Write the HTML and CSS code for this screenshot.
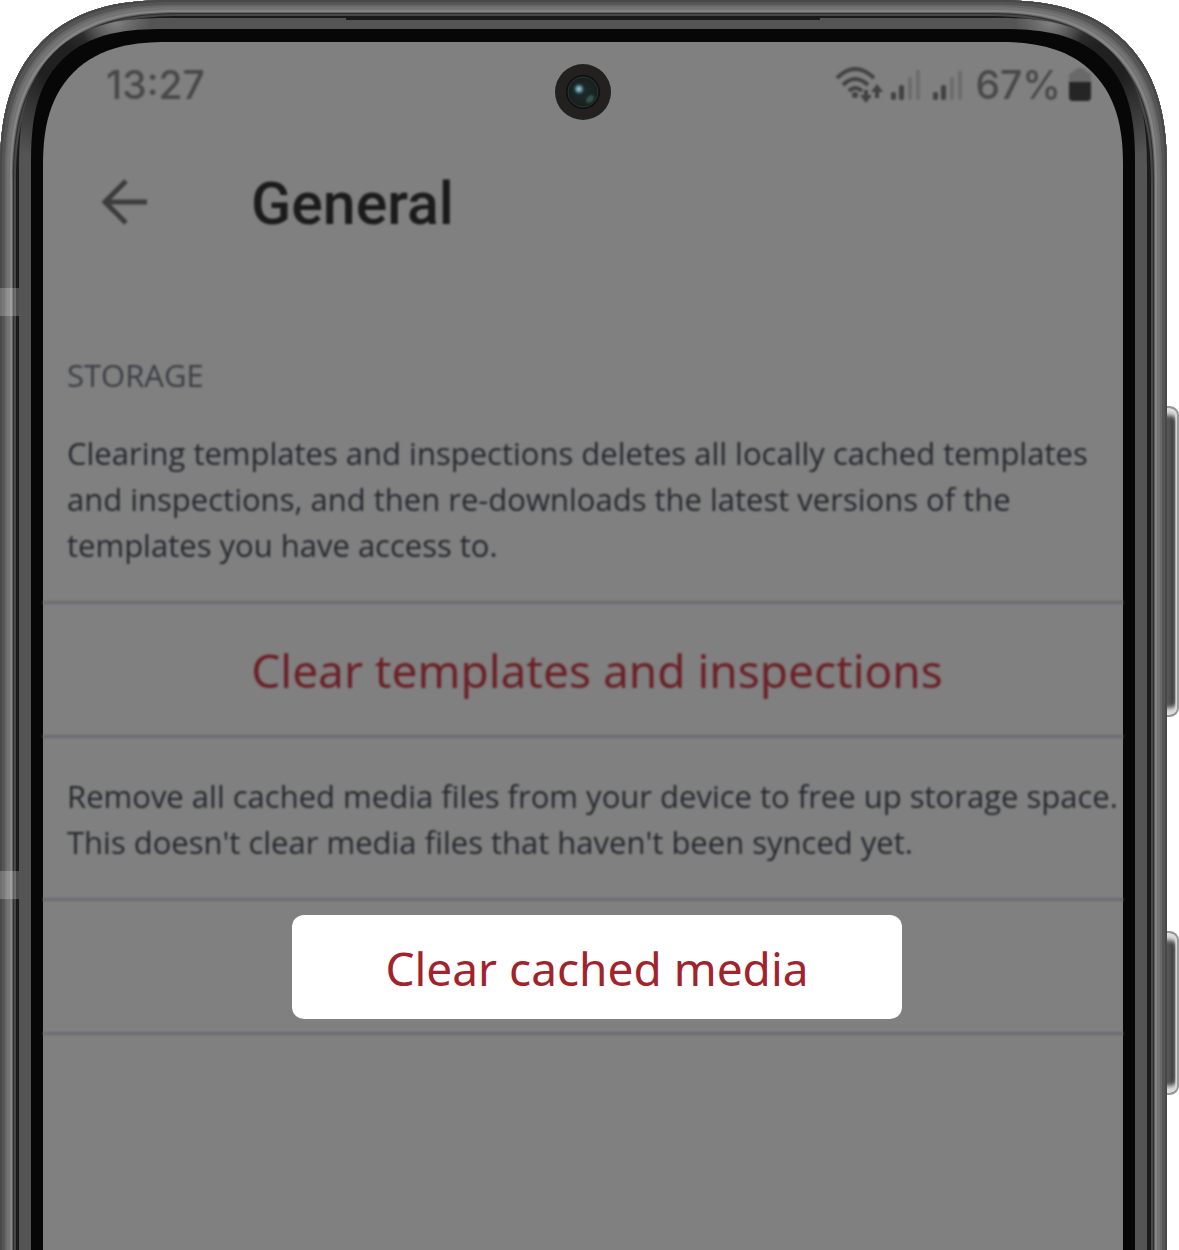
FILE: index.html
```
<!DOCTYPE html>
<html lang="en">
  <head>
    <meta charset="utf-8">
    <meta name="viewport" content="width=device-width, initial-scale=1">
    <title>General</title>
    <link rel="stylesheet" href="styles.css">
  </head>

  <body>
    <div class="device">
      <div class="side-key volume"></div>
      <div class="side-key power"></div>

      <div class="phone">
        <div class="antenna antenna-top"></div>
        <div class="antenna antenna-bottom"></div>
        <div class="metal">
          <div class="speaker"></div>
          <div class="bezel">
            <div class="screen">

              <svg class="camera" viewBox="0 0 56 56" aria-hidden="true">
                <defs>
                  <radialGradient id="lens">
                    <stop offset="0" stop-color="#1c2a2b"/>
                    <stop offset="1" stop-color="#172020"/>
                  </radialGradient>
                  <radialGradient id="glint">
                    <stop offset="0" stop-color="#9cc4d2"/>
                    <stop offset="0.4" stop-color="#5b8594"/>
                    <stop offset="1" stop-color="#1c2a2b" stop-opacity="0"/>
                  </radialGradient>
                  <radialGradient id="green">
                    <stop offset="0" stop-color="#36584e"/>
                    <stop offset="0.5" stop-color="#2c4a43"/>
                    <stop offset="1" stop-color="#1c2a2b" stop-opacity="0"/>
                  </radialGradient>
                </defs>
                <circle cx="28" cy="28" r="28" fill="#22211f"/>
                <circle cx="28" cy="28" r="17" fill="#0f100f"/>
                <circle cx="28" cy="28" r="15" fill="url(#lens)" stroke="#2b3433"/>
                <circle cx="24" cy="25" r="7" fill="url(#glint)"/>
                <ellipse cx="35" cy="35" rx="7" ry="5" fill="url(#green)" transform="rotate(-45 35 35)"/>
              </svg>

              <header class="status-bar">
                <span>13:27</span>
                <div class="status-icons">
                  <svg width="48" height="38" viewBox="0 0 48 38" fill="none" stroke="#414141" stroke-width="4">
                    <path d="M2 12Q20 -6 39 12"/>
                    <path d="M8 19Q20 7 33 19"/>
                    <path d="M14 25Q20 19 27 25"/>
                    <circle cx="20" cy="29" r="3" fill="#414141" stroke="none"/>
                    <path d="M31 24V33M42 32V23" stroke-width="4"/>
                    <path d="M25 29H37L31 37ZM36 26H48L42 18Z" fill="#414141" stroke="none"/>
                  </svg>
                  <svg width="30" height="38" viewBox="0 0 30 38">
                    <rect x="0" y="26" width="5" height="8" rx="2" fill="#414141"/>
                    <rect x="8" y="19" width="5" height="15" rx="2" fill="#414141"/>
                    <rect x="17" y="11" width="4" height="23" rx="2" fill="#6c6c6c"/>
                    <rect x="25" y="4" width="4" height="30" rx="2" fill="#6c6c6c"/>
                  </svg>
                  <svg width="30" height="38" viewBox="0 0 30 38">
                    <rect x="0" y="26" width="5" height="8" rx="2" fill="#414141"/>
                    <rect x="8" y="19" width="5" height="15" rx="2" fill="#414141"/>
                    <rect x="17" y="11" width="4" height="23" rx="2" fill="#6c6c6c"/>
                    <rect x="25" y="4" width="4" height="30" rx="2" fill="#6c6c6c"/>
                  </svg>
                  <span>67%</span>
                  <svg width="22" height="38" viewBox="0 0 22 38">
                    <path d="M0 17V10Q0 6 5 6Q6 2 11 2T17 6Q22 6 22 10V17Z" fill="#696969"/>
                    <path d="M0 16H22V31Q22 35 18 35H4Q0 35 0 31Z" fill="#252525"/>
                  </svg>
                </div>
              </header>

              <div class="app-bar">
                <button class="back" type="button" aria-label="Back">
                  <svg width="48" height="48" viewBox="0 0 48 48" fill="none" stroke="#3c3c3c" stroke-width="5">
                    <path d="M46 24H5M25 3L4 24L25 45"/>
                  </svg>
                </button>
                <h1>General</h1>
              </div>

              <main>
                <h2>STORAGE</h2>
                <p>Clearing templates and inspections deletes all locally cached templates and inspections, and then re-downloads the latest versions of the templates you have access to.</p>
                <div class="row">
                  <button class="action" type="button">Clear templates and inspections</button>
                </div>
                <p class="media-text">Remove all cached media files from your device to free up storage space. This doesn't clear media files that haven't been synced yet.</p>
                <div class="row">
                  <button class="action highlight" type="button">Clear cached media</button>
                </div>
              </main>

            </div>
          </div>
        </div>
      </div>
    </div>
  </body>
</html>
```

FILE: styles.css
```
* {
  box-sizing: border-box;
}

body {
  margin: 0;
  background: #fff;
}

.device {
  position: relative;
  height: 100vh;
  padding-right: 12px;
  overflow: hidden;
}

/* phone body, each layer sits inside the one before */
.phone {
  position: relative;
  display: flex;
  height: calc(100% + 60px);
  padding: 18px 20px 18px 19px;
  border-radius: 170px 170px 0 0;
  corner-shape: superellipse(1.3);
  background: #1a1a1a;
  box-shadow: inset 0 0 0 2px #484848, inset 0 0 0 5px #555,
    inset 0 0 0 7px #686868, inset 0 0 0 10px #747474,
    inset 0 0 0 12px #858585, inset 0 0 0 13px #606060,
    inset 0 0 0 14px #303030, inset 0 0 0 16px #474747;
}

.metal {
  position: relative;
  flex: 1;
  display: flex;
  min-width: 0;
  padding: 11px 12px;
  border-radius: 150px 150px 0 0;
  corner-shape: superellipse(1.4);
  background:
    radial-gradient(circle at 96px 2px, #858585 0, rgba(133, 133, 133, 0) 36px),
    radial-gradient(circle at calc(100% - 96px) 2px, #858585 0, rgba(133, 133, 133, 0) 36px),
    radial-gradient(circle at 40px 46px, #202020 20px, rgba(32, 32, 32, 0) 96px),
    radial-gradient(circle at calc(100% - 40px) 46px, #202020 20px, rgba(32, 32, 32, 0) 96px),
    #545454;
}

.speaker {
  position: absolute;
  top: 0;
  left: 29%;
  right: 29%;
  height: 2px;
  background: #1a1a1a;
}

.bezel {
  flex: 1;
  display: flex;
  min-width: 0;
  padding: 13px 12px;
  border-radius: 134px 134px 0 0;
  corner-shape: superellipse(1.4);
  background: #070707;
}

.screen {
  position: relative;
  flex: 1;
  min-width: 0;
  border-radius: 124px 124px 0 0;
  corner-shape: superellipse(1.3);
  background: #808080;
  font-family: "Noto Sans", sans-serif;
}

.antenna {
  position: absolute;
  left: 0;
  width: 19px;
  height: 28px;
  background: rgba(255, 255, 255, 0.22);
}

.antenna-top {
  top: 288px;
}

.antenna-bottom {
  top: 871px;
}

.side-key {
  position: absolute;
  right: 0;
  width: 24px;
  border: 2px solid #999;
  border-radius: 9px;
  background: linear-gradient(90deg, #555 12px, #333 18px, #ccc 19px);
  box-shadow: inset 0 7px 4px #ddd, inset 0 -7px 4px #ddd;
}

.volume {
  top: 406px;
  height: 311px;
}

.power {
  top: 931px;
  height: 164px;
}

.camera {
  position: absolute;
  top: 22px;
  left: calc(50% - 28px);
  width: 56px;
  height: 56px;
}

/* everything behind the highlight is out of focus */
.status-bar,
.app-bar,
h2,
p,
.action {
  filter: blur(1px);
}

.status-bar {
  display: flex;
  justify-content: space-between;
  align-items: center;
  padding: 19px 32px 0 63px;
  font: 500 39px/48px Inter, sans-serif;
  color: #484848;
}

.status-icons {
  display: flex;
  align-items: center;
  gap: 12px;
}

.status-icons svg:first-child {
  margin-right: -4px;
}

.status-icons svg:last-child {
  margin-left: -4px;
}

.app-bar {
  display: flex;
  align-items: center;
  gap: 102px;
  height: 104px;
  margin-top: 41px;
  padding-left: 58px;
}

.back {
  display: flex;
  padding: 0;
  border: 0;
  background: none;
}

h1 {
  margin: 0;
  padding-top: 4px;
  font: 500 59px/64px Roboto, sans-serif;
  color: #1b1b1b;
}

h2,
p {
  font-family: "Open Sans", "Noto Sans", sans-serif;
  font-size: 31px;
  line-height: 46px;
}

h2 {
  margin: 98px 24px 32px;
  font-weight: 400;
  color: #3a3d44;
}

p {
  margin: 0;
  padding: 0 0 33px 24px;
  color: #25282e;
}

.media-text {
  padding-top: 35px;
}

.row {
  position: relative;
  display: flex;
  justify-content: center;
  align-items: center;
  height: 137px;
  padding-left: 28px;
}

.row::before,
.row::after {
  content: "";
  position: absolute;
  left: 0;
  right: 0;
  height: 3px;
  background: #6b6b74;
  filter: blur(1px);
}

.row::before {
  top: 0;
}

.row::after {
  bottom: 0;
}

.action {
  padding: 0;
  border: 0;
  background: none;
  font: 400 46px/64px "Noto Sans", sans-serif;
  color: #6b2027;
}

.highlight {
  width: 610px;
  height: 104px;
  padding-top: 2px;
  border-radius: 12px;
  background: #fff;
  color: #a1232b;
  filter: none;
}
```
